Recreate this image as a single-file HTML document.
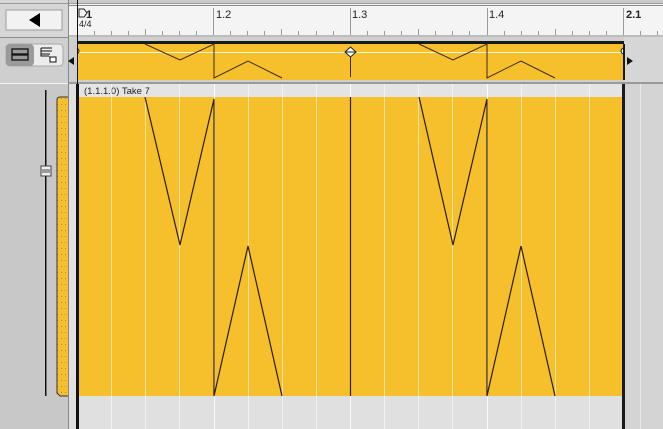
<!DOCTYPE html>
<html><head><meta charset="utf-8"><style>
html,body{margin:0;padding:0;width:663px;height:429px;overflow:hidden;background:#c9c9c9}
text{font-family:"Liberation Sans",sans-serif}
</style></head><body>
<svg width="663" height="429" viewBox="0 0 663 429" xmlns="http://www.w3.org/2000/svg">
<defs>
<pattern id="dots" width="4" height="6" patternUnits="userSpaceOnUse"><rect width="4" height="6" fill="#f5c030"/><rect x="1" y="2" width="1" height="1" fill="#b8881a"/></pattern>
</defs>
<!-- left panel -->
<rect x="0" y="0" width="69" height="429" fill="#c9c9c9"/>
<rect x="0" y="0" width="69" height="37" fill="#d6d6d6"/>
<rect x="0" y="3" width="663" height="1" fill="#9a9a9a"/>
<rect x="6" y="10" width="56" height="20" fill="#f2f2f2" stroke="#9c9c9c"/>
<path d="M29 20 L40 13 L40 27 Z" fill="#000"/>
<rect x="0" y="37" width="69" height="1" fill="#8a8a8a"/>
<rect x="0" y="38" width="69" height="45" fill="#cfcfcf"/>
<rect x="6" y="44" width="57" height="22" rx="4" fill="#ececec" stroke="#a8a8a8"/>
<rect x="6" y="44" width="28" height="22" rx="4" fill="#9a9a9a"/>
<rect x="12" y="49" width="16" height="5" fill="none" stroke="#111" stroke-width="1.3"/>
<rect x="12" y="55" width="16" height="5" fill="none" stroke="#111" stroke-width="1.3"/>
<path d="M41 48 H52 M41 51 H52 M41 54 H50 M49 57 H56 M41 48 V56 H49" stroke="#111" fill="none"/>
<rect x="50" y="57" width="6" height="5" fill="#fff" stroke="#111"/>
<rect x="0" y="83" width="69" height="1" fill="#f5f5f5"/>
<rect x="0" y="84" width="69" height="345" fill="#c8c8c8"/>
<rect x="45" y="90" width="1.5" height="306" fill="#111"/>
<rect x="41" y="166" width="10" height="10" fill="#f0f0f0" stroke="#444"/>
<path d="M42 170 H50 M42 172 H50" stroke="#444"/>
<path d="M69 97 H60 Q57 97 57 100 V393 L60 396 H69 Z" fill="url(#dots)" stroke="#333" stroke-width="1"/>
<rect x="68" y="0" width="1" height="429" fill="#888"/>
<!-- ruler -->
<rect x="69" y="4" width="594" height="31" fill="#f4f4f4"/>
<rect x="69" y="5" width="594" height="1" fill="#888"/>
<rect x="69" y="35" width="594" height="2" fill="#bdbdbd"/>
<g stroke="#999" stroke-width="1">
<path d="M94.5 31V35 M111.5 31V35 M128.5 31V35 M145.5 29V35 M162.5 31V35 M179.5 31V35 M196.5 31V35 M213.5 8V35 M230.5 31V35 M247.5 31V35 M264.5 31V35 M281.5 29V35 M298.5 31V35 M316.5 31V35 M333.5 31V35 M350.5 8V35 M367.5 31V35 M384.5 31V35 M401.5 31V35 M418.5 29V35 M435.5 31V35 M452.5 31V35 M469.5 31V35 M487.5 8V35 M504.5 31V35 M521.5 31V35 M538.5 31V35 M555.5 29V35 M572.5 31V35 M589.5 31V35 M606.5 31V35 M623.5 8V35 M640.5 31V35 M657.5 31V35"/>
</g>
<path d="M79 9 H84 L87 13 L84 17 H79 Z" fill="none" stroke="#222"/>
<text x="86" y="18" font-size="11" font-weight="bold" fill="#222">1</text>
<text x="79" y="27" font-size="9" fill="#222">4/4</text>
<text x="216" y="18" font-size="11" fill="#222">1.2</text>
<text x="352" y="18" font-size="11" fill="#222">1.3</text>
<text x="489" y="18" font-size="11" fill="#222">1.4</text>
<text x="626" y="18" font-size="11" font-weight="bold" fill="#222">2.1</text>
<!-- clip overview row -->
<rect x="69" y="37" width="594" height="46" fill="#cfcfcf"/>
<rect x="624" y="37" width="39" height="46" fill="#d6d6d6"/>
<rect x="77" y="41" width="547" height="3" fill="#1a1a1a"/>
<rect x="77" y="44" width="547" height="36" fill="#f6c02c"/>
<rect x="77" y="52" width="547" height="1" fill="#fff4d0"/>
<g stroke="#3a2a10" stroke-width="1" fill="none">
<path d="M145 44 L180 60 L214 44 V78 L248 61 L282 78"/>
<path d="M419 44 L453 60 L487 44 V78 L521 61 L555 78"/>
<path d="M350.5 52 V77"/>
</g>
<path d="M345 52 L350.5 47 L356 52 L350.5 57 Z" fill="#fff" stroke="#222"/>
<path d="M345 52 H356" stroke="#222"/>
<rect x="623" y="44" width="2" height="36" fill="#1a1a1a"/>
<path d="M77 48 Q81 51 77 54" fill="#fff" stroke="#222"/>
<path d="M623 48 Q619 51 623 54" fill="#fff" stroke="#222"/>
<path d="M68 61 L74 57 V65 Z" fill="#111"/>
<path d="M627 57 L633 61 L627 65 Z" fill="#111"/>
<rect x="69" y="82" width="594" height="2" fill="#9a9a9a"/>
<!-- lane -->
<rect x="69" y="84" width="594" height="345" fill="#e0e0e0"/>
<rect x="624" y="84" width="39" height="345" fill="#d4d4d4"/>
<rect x="77" y="84" width="547" height="13" fill="#e4e4e4"/>
<text x="84" y="94" font-size="9.5" fill="#222">(1.1.1.0) Take 7</text>
<rect x="77" y="97" width="547" height="299" fill="#f6c02c"/>
<g stroke="#fff" stroke-width="1" opacity="0.55">
<path d="M111.5 84V429 M145.5 84V429 M179.5 84V429 M248.5 84V429 M282.5 84V429 M316.5 84V429 M384.5 84V429 M418.5 84V429 M452.5 84V429 M521.5 84V429 M555.5 84V429 M589.5 84V429 M640.5 84V429"/>
</g>
<g stroke="#fff" stroke-width="1" opacity="0.9">
<path d="M214.5 84V429 M350.5 84V429 M487.5 84V429"/>
</g>
<g stroke="#2a1c08" stroke-width="1.2" fill="none">
<path d="M145 97 L180 245 L214 99 V396 L248 246 L282 396"/>
<path d="M419 97 L453 245 L487 99 V396 L521 246 L555 396"/>
<path d="M350.5 97 V396"/>
</g>
<rect x="76" y="84" width="3" height="345" fill="#111"/>
<rect x="77" y="0" width="1" height="84" fill="#111"/>
<rect x="622" y="84" width="3" height="345" fill="#1a1a1a"/>
</svg>
</body></html>
